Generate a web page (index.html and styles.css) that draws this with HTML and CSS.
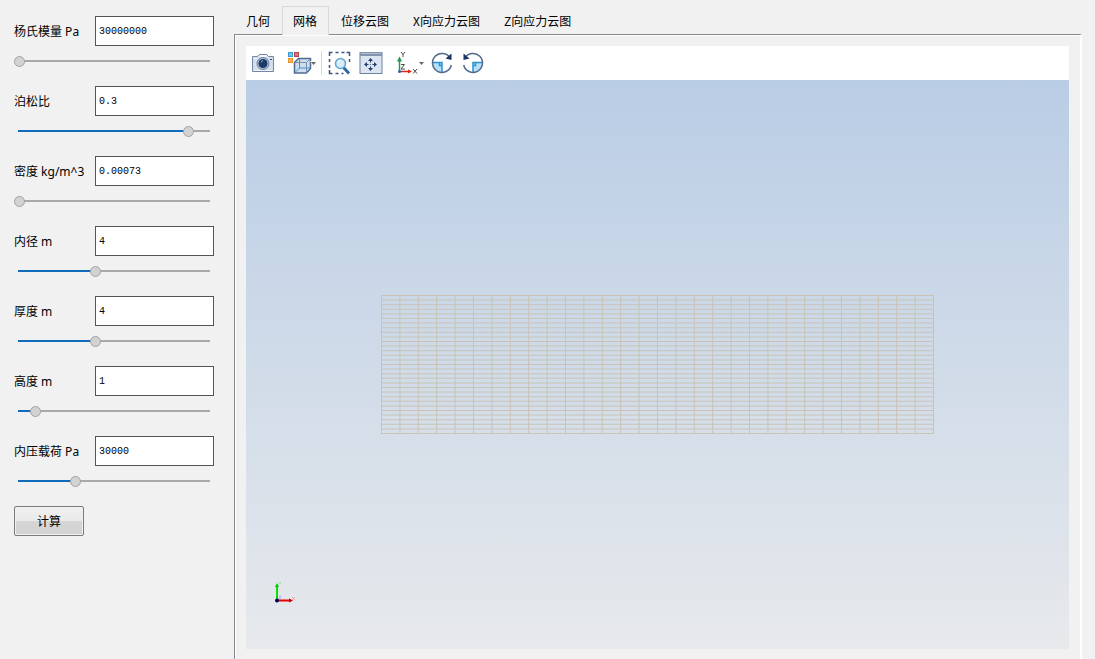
FILE: index.html
```html
<!DOCTYPE html>
<html lang="zh-CN">
<head>
<meta charset="utf-8">
<title>网格</title>
<link rel="stylesheet" href="styles.css">
</head>
<body>
<div class="app">
  <form class="params">
    <div class="param">
      <label for="young">杨氏模量 Pa</label>
      <input class="value" id="young" type="text" value="30000000">
      <input class="slider" type="range" min="0" max="100" step="any" value="0" style="--v:0" aria-label="杨氏模量">
    </div>
    <div class="param">
      <label for="poisson">泊松比</label>
      <input class="value" id="poisson" type="text" value="0.3">
      <input class="slider" type="range" min="0" max="100" step="any" value="91.4" style="--v:91.4" aria-label="泊松比">
    </div>
    <div class="param">
      <label for="density">密度 kg/m^3</label>
      <input class="value" id="density" type="text" value="0.00073">
      <input class="slider" type="range" min="0" max="100" step="any" value="0" style="--v:0" aria-label="密度">
    </div>
    <div class="param">
      <label for="radius">内径 m</label>
      <input class="value" id="radius" type="text" value="4">
      <input class="slider" type="range" min="0" max="100" step="any" value="41" style="--v:41" aria-label="内径">
    </div>
    <div class="param">
      <label for="thickness">厚度 m</label>
      <input class="value" id="thickness" type="text" value="4">
      <input class="slider" type="range" min="0" max="100" step="any" value="41" style="--v:41" aria-label="厚度">
    </div>
    <div class="param">
      <label for="height">高度 m</label>
      <input class="value" id="height" type="text" value="1">
      <input class="slider" type="range" min="0" max="100" step="any" value="8.6" style="--v:8.6" aria-label="高度">
    </div>
    <div class="param">
      <label for="load">内压载荷 Pa</label>
      <input class="value" id="load" type="text" value="30000">
      <input class="slider" type="range" min="0" max="100" step="any" value="30.3" style="--v:30.3" aria-label="内压载荷">
    </div>
    <button class="compute" type="button">计算</button>
  </form>

  <main class="views">
    <div class="tabs" role="tablist">
      <button class="tab" type="button" role="tab">几何</button>
      <button class="tab tab-active" type="button" role="tab" aria-selected="true">网格</button>
      <button class="tab" type="button" role="tab">位移云图</button>
      <button class="tab" type="button" role="tab">X向应力云图</button>
      <button class="tab" type="button" role="tab">Z向应力云图</button>
    </div>
    <section class="page">
      <div class="toolbar">
        <button class="tool" type="button" aria-label="截图">
          <svg width="31" height="34" viewBox="0 0 31 34">
            <path d="M5.500 10.500h5l2-2h7l2 2h5v15h-21z" fill="#d5deea" stroke="#7486a3"/>
            <path d="M13 9h6l1 2h-8z" fill="#f4f7fb"/>
            <path d="M6.500 12.500h4M6.500 24.500h19" stroke="#f1f5fa"/>
            <circle cx="16" cy="17.500" r="6" fill="#a9bcd4" stroke="#6c83a5"/>
            <circle cx="16" cy="17.500" r="4.500" fill="#1d3a66"/>
            <path d="M14 16.500a2.500 2.500 0 0 1 2-2" stroke="#8fabd0" fill="none"/>
            <rect x="23" y="13" width="2" height="1" fill="#36507a"/>
          </svg>
        </button>
        <button class="tool tool-drop" type="button" aria-label="视图">
          <svg width="40" height="34" viewBox="0 0 40 34">
            <rect x="10.500" y="6.500" width="4" height="4" fill="#6fc1ea" stroke="#3a9fd4"/>
            <rect x="16.500" y="6.500" width="4" height="4" fill="#c9787c" stroke="#b3474e"/>
            <rect x="10.500" y="12.500" width="4" height="4" fill="#f8b65f" stroke="#ee9325"/>
            <path d="M16.500 16.500l4-4h12v10l-4 4.500h-12z" fill="#cfdeed" stroke="#50698f" stroke-width="1.500"/>
            <path d="M17 16.500h11.500V27M28.500 16.500l4-4" fill="none" stroke="#7b90ae"/>
            <path d="M21.500 13v9h10.500M21.500 22l-4.500 4.500" fill="none" stroke="#3f94cc"/>
            <path d="M32 15h7l-3.500 5z" fill="#fff"/>
            <path d="M33 16h5l-2.500 3z" fill="#666"/>
          </svg>
        </button>
        <span class="separator"></span>
        <button class="tool" type="button" aria-label="框选缩放">
          <svg width="31" height="34" viewBox="0 0 31 34">
            <path d="M4.500 10V6.500h3M10.500 6.500h3M16.500 6.500h3M21.500 6.500h3V10M4.500 13v3M4.500 19v3M4.500 24v3.500h3M10.500 27.500h3M24.500 13v3M16.500 27.500h2" fill="none" stroke="#3c547f" stroke-width="1.500"/>
            <path d="M18.500 21.500l5.500 6" stroke="#2c6ba6" stroke-width="3"/>
            <circle cx="15.500" cy="17.500" r="5" fill="#d6edfa" stroke="#5fa6d0" stroke-width="1.500"/>
            <path d="M13 16.500a3 3 0 0 1 3-2" stroke="#fff" fill="none"/>
          </svg>
        </button>
        <button class="tool" type="button" aria-label="适应窗口">
          <svg width="31" height="34" viewBox="0 0 31 34">
            <rect x="4" y="6.500" width="22" height="21" fill="#dce5ef" stroke="#70819f"/>
            <path d="M4 6h22v4H4z" fill="#8494ae"/>
            <path d="M5 7.500h20" stroke="#b3bfd0"/>
            <path d="M14.500 12l2.500 3h-5zM14.500 25l2.500-3h-5zM8 18.500l3-2.500v5zM21 18.500l-3-2.500v5z" fill="#243f70"/>
            <path d="M14.500 14v2.500M14.500 20.500v2.500M10 18.500h2.500M16.500 18.500h2.500" stroke="#243f70"/>
            <rect x="14" y="18" width="1" height="1" fill="#5b7196"/>
          </svg>
        </button>
        <button class="tool tool-drop" type="button" aria-label="坐标轴视图">
          <svg width="40" height="34" viewBox="0 0 40 34">
            <path d="M12.500 25V15" stroke="#1f9a55" stroke-width="1.500"/>
            <path d="M12.500 10.500l2.500 5h-5z" fill="#1f9a55"/>
            <path d="M13 25.500h10" stroke="#e3211c" stroke-width="1.500"/>
            <path d="M25 25.500l-4-2v4z" fill="#e3211c"/>
            <circle cx="12.500" cy="25.500" r="1.500" fill="#2565c4"/>
            <path d="M14 6l2 2.500 2-2.500M16 8.500V11M14 18.500h3.500l-3.500 4.500h4M26 23l4 4.500M30 23l-4 4.500" fill="none" stroke="#4a4a4a"/>
            <path d="M32 16h5l-2.500 3z" fill="#666"/>
          </svg>
        </button>
        <button class="tool" type="button" aria-label="顺时针旋转">
          <svg width="31" height="34" viewBox="0 0 31 34">
            <path d="M15 16.500v10a9.500 9.500 0 0 1-9.500-10z" fill="#b5e0f7"/>
            <path d="M5.500 16.500H15V27M12.500 17v2.500H15" fill="none" stroke="#2c93cf" stroke-width="1.500"/>
            <path d="M22 10.500A9.500 9.500 0 1 0 24.500 17" transform="rotate(12 15 17)" fill="none" stroke="#54698c" stroke-width="1.500"/>
            <path d="M24.500 7.500v6.500l-6-1.500z" fill="#1d3565"/>
          </svg>
        </button>
        <button class="tool" type="button" aria-label="逆时针旋转">
          <svg width="31" height="34" viewBox="0 0 31 34">
            <path d="M15 16.500v10a9.500 9.500 0 0 0 9.500-10z" fill="#b5e0f7"/>
            <path d="M24.500 16.500H15V27M17.500 17v2.500H15" fill="none" stroke="#2c93cf" stroke-width="1.500"/>
            <path d="M8 10.500A9.500 9.500 0 1 1 5.500 17" transform="rotate(-12 15 17)" fill="none" stroke="#54698c" stroke-width="1.500"/>
            <path d="M5.500 7.500v6.500l6-1.500z" fill="#1d3565"/>
          </svg>
        </button>
      </div>
      <div class="viewport">
        <!-- 30 x 30 element mesh: dash period is the cell size -->
        <svg class="mesh" width="553" height="139" viewBox="0 0 553 139">
          <path d="M0 69.500H553" stroke-width="139" stroke-dasharray="1 17.400"/>
          <path d="M276.500 0V139" stroke-width="553" stroke-dasharray="1 3.600"/>
        </svg>
        <svg class="triad" width="24" height="24" viewBox="0 0 24 24">
          <path d="M5 19V5" stroke="#00e400" stroke-width="2"/>
          <path d="M5 2l2 4H3z" fill="#00c800"/>
          <path d="M5 19.500h14" stroke="#e80000" stroke-width="2"/>
          <path d="M21 19.500l-4-2v4z" fill="#c80000"/>
          <path d="M7 1l1 1 1-1M8 2v1.500" fill="none" stroke="#8fe88f"/>
          <path d="M20 16l3 3M23 16l-3 3" stroke="#f0a0a0"/>
          <path d="M7 15h2l-2 2.500h2" fill="none" stroke="#b0b0f8"/>
          <circle cx="5" cy="19.500" r="2" fill="#00005a"/>
        </svg>
      </div>
    </section>
  </main>
</div>
</body>
</html>
```
FILE: styles.css
```css
* {
  box-sizing: border-box;
}

body {
  margin: 0;
  background: #f1f1f1;
  color: #000;
  font: 12px/16px "Noto Sans", "Noto Sans CJK SC", sans-serif;
}

button,
input {
  margin: 0;
  font: inherit;
  color: inherit;
}

.app {
  display: flex;
  height: 100vh;
  overflow: hidden;
}

.params {
  flex: none;
  width: 234px;
  padding: 16px 20px 0 14px;
}

.param {
  display: grid;
  grid-template-columns: 81px 1fr;
  grid-template-rows: 30px 30px;
  align-items: center;
  margin-bottom: 10px;
  white-space: nowrap;
}

.param label {
  padding-top: 1px;
}

.value {
  width: 100%;
  height: 30px;
  padding: 0 3px;
  border: 1px solid #545454;
  background: #fff;
  font: 10px/16px "Liberation Mono", monospace;
}

.slider {
  grid-column: 1 / -1;
  appearance: none;
  width: calc(100% - 4px);
  height: 12px;
  background:
    linear-gradient(#0f6cbd, #0f6cbd) 4px 5px / calc(var(--v) * 1% - 4px) 2px no-repeat,
    linear-gradient(#a9a9a9, #a9a9a9) 4px 5px / 100% 2px no-repeat;
}

.slider::-webkit-slider-thumb {
  appearance: none;
  width: 11px;
  height: 11px;
  border: 1px solid #a3a3a3;
  border-radius: 50%;
  background: #d2d2d2;
}

.slider::-moz-range-thumb {
  width: 11px;
  height: 11px;
  border: 1px solid #a3a3a3;
  border-radius: 50%;
  background: #d2d2d2;
}

.compute {
  width: 70px;
  height: 30px;
  padding: 2px 0 0;
  border: 1px solid #7b7b7b;
  border-radius: 2px;
  background: linear-gradient(#f0f0f0, #e9e9e9 50%, #d6d6d6 50%, #d2d2d2);
  box-shadow: inset 0 0 0 1px #f0f0f0;
}

.views {
  flex: 1;
  display: flex;
  flex-direction: column;
  min-width: 0;
  padding: 6px 13px 0 0;
}

.tabs {
  display: flex;
  height: 29px;
  font-family: "Noto Sans CJK SC", sans-serif;
}

.tab {
  height: 29px;
  padding: 1px 12px 0;
  border: 0;
  background: none;
}

.tab-active {
  z-index: 1;
  padding: 0 11px 0 10px;
  border: 1px solid #d9d9d9;
  border-bottom: 0;
  background: #f1f1f1;
}

.page {
  flex: 1;
  display: flex;
  flex-direction: column;
  min-height: 0;
  margin-top: -1px;
  padding: 11px 11px 10px;
  border-top: 1px solid #87878f;
  border-left: 1px solid #87878f;
  border-right: 2px solid #fff;
  box-shadow: inset 1px 1px #fff;
}

.toolbar {
  flex: none;
  display: flex;
  align-items: center;
  height: 34px;
  padding: 0 1px;
  background: #fff;
}

.tool {
  width: 31px;
  height: 34px;
  padding: 0;
  border: 0;
  background: none;
}

.tool-drop {
  width: 40px;
}

.tool svg {
  display: block;
}

.separator {
  width: 1px;
  height: 24px;
  margin: 0 3px;
  background: #d8d8d8;
}

.viewport {
  flex: 1;
  position: relative;
  display: flex;
  align-items: center;
  justify-content: center;
  background: linear-gradient(#b9cde5, #e7e9ec);
}

.mesh {
  flex: none;
  fill: none;
  stroke: #c8c3b6;
}

.triad {
  position: absolute;
  left: 26px;
  bottom: 44px;
}
```
